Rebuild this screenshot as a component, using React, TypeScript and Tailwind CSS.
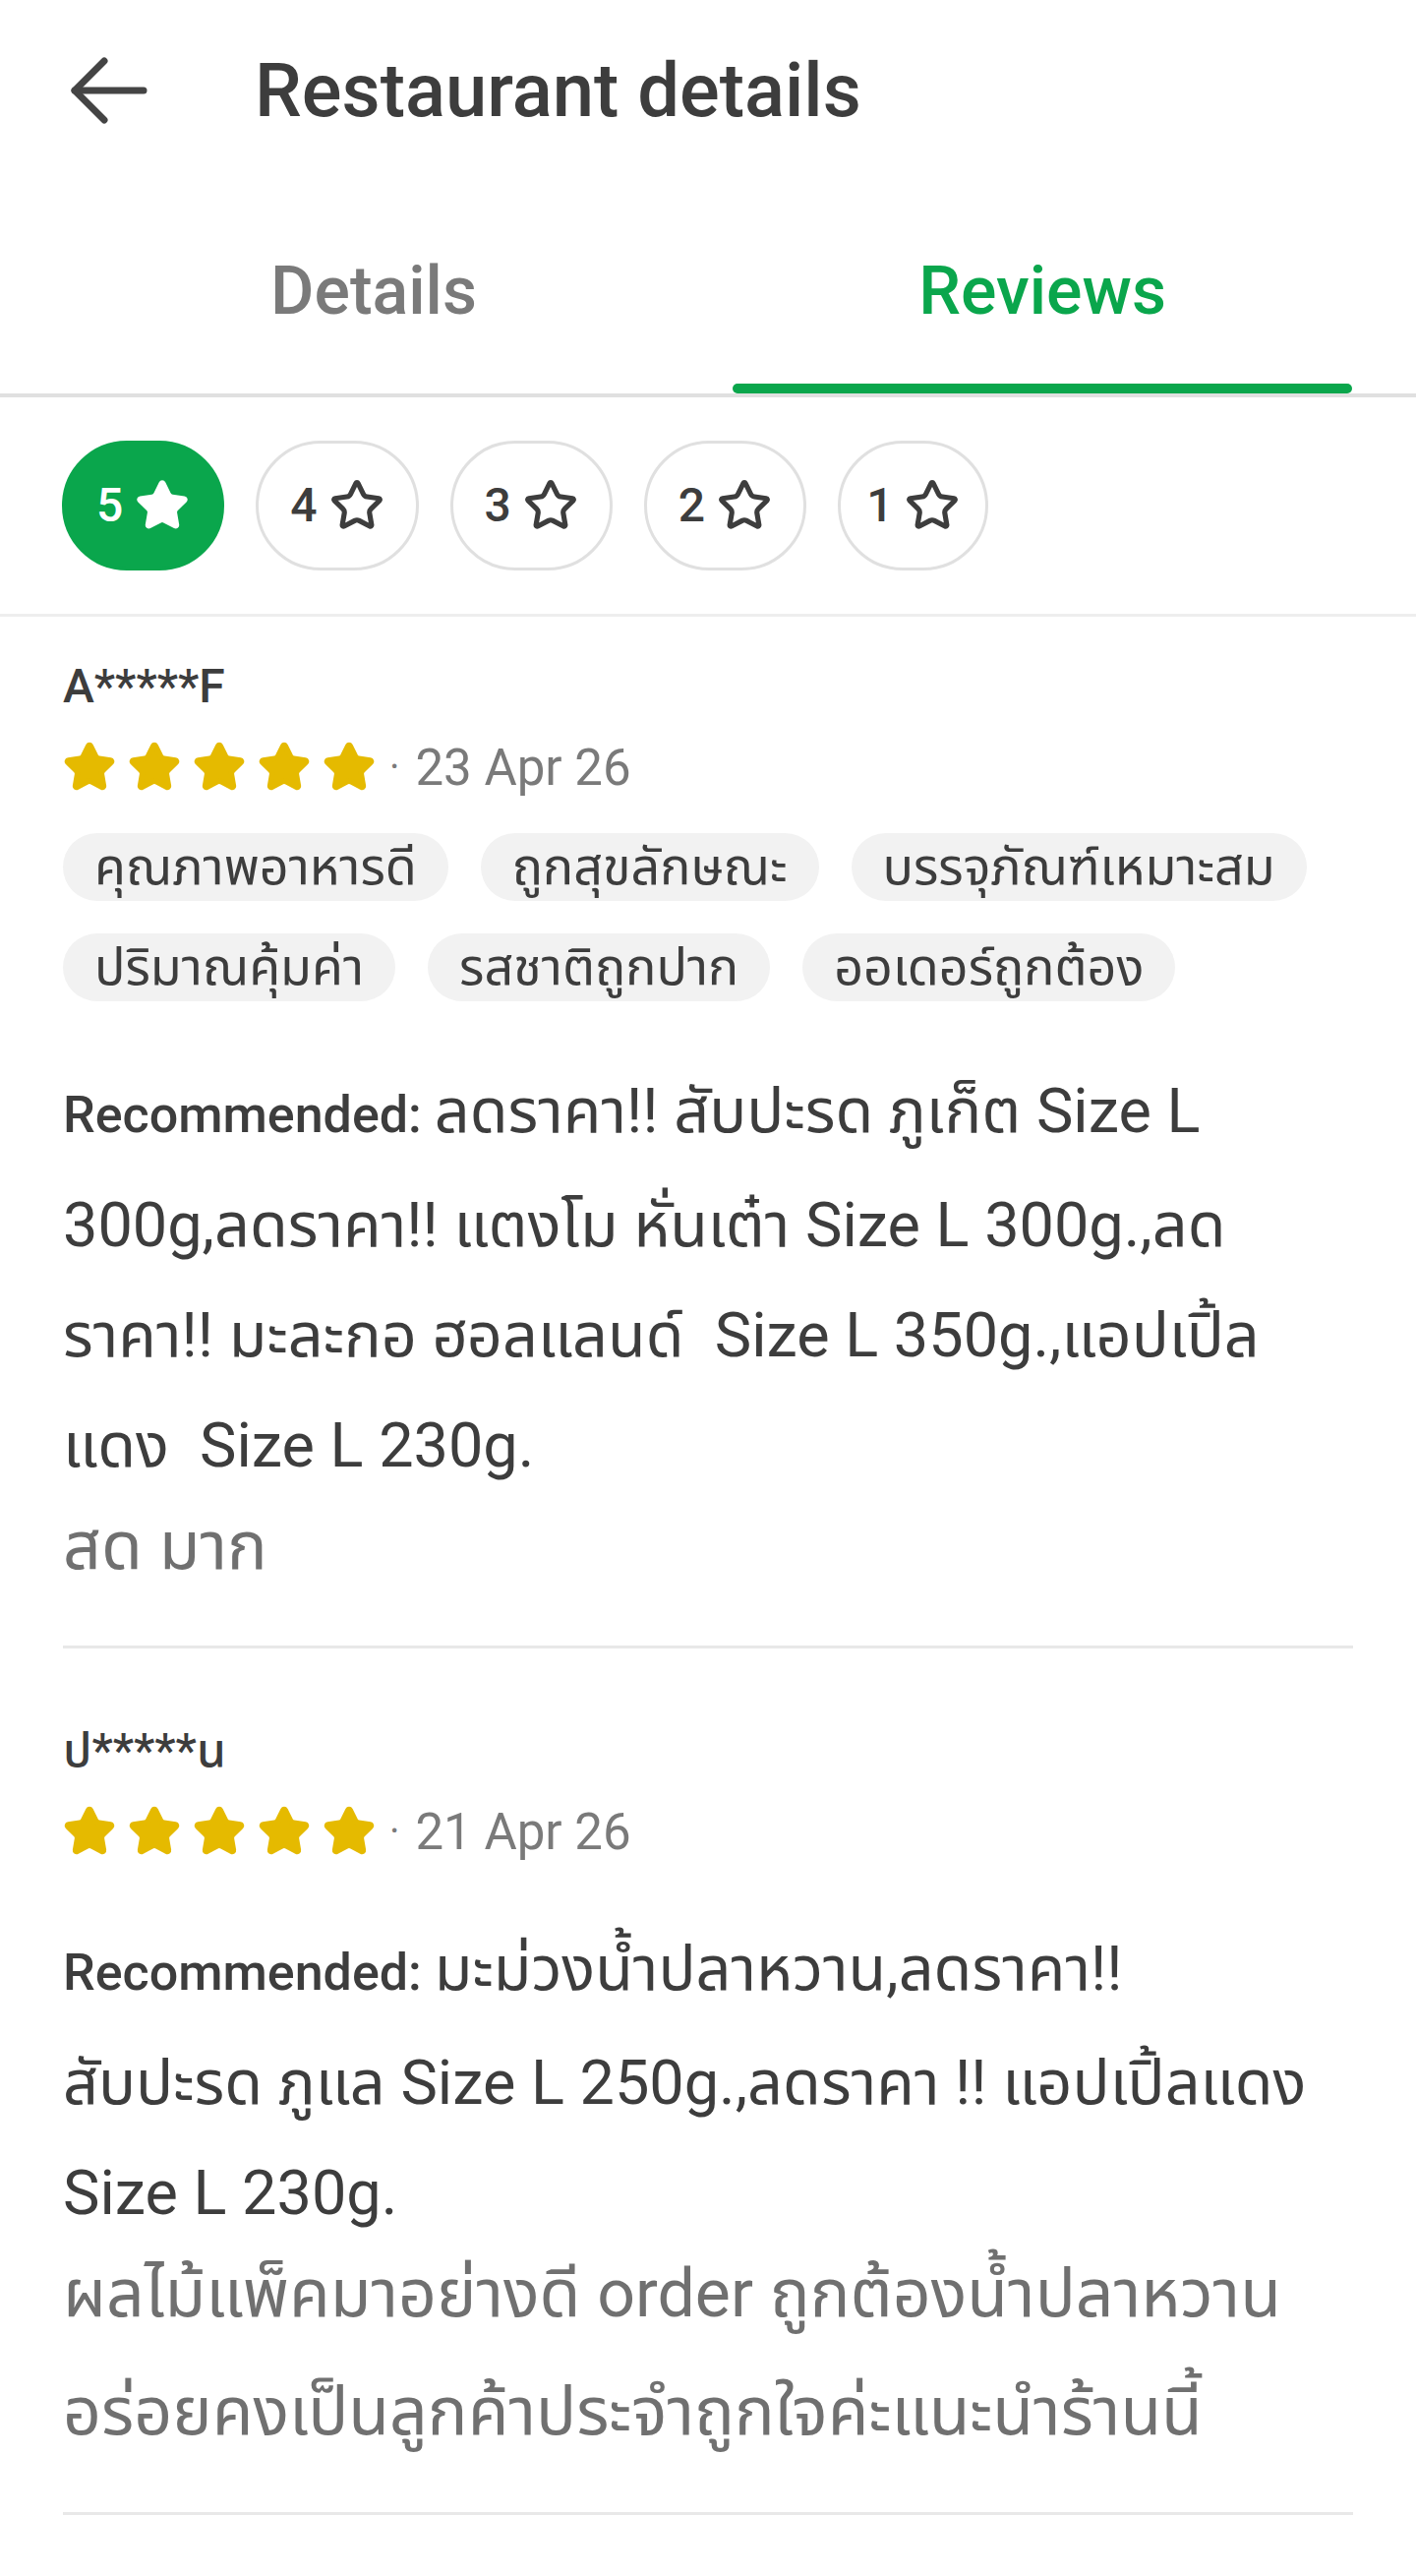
import { Star } from 'lucide-react';

const font = { fontFamily: 'Roboto, "Noto Sans", "Noto Sans Thai", sans-serif' };

type Review = {
  name: string;
  date: string;
  tags: string[];
  items: string;
  comment: string;
};

const reviews: Review[] = [
  {
    name: 'A*****F',
    date: '23 Apr 26',
    tags: ['คุณภาพอาหารดี', 'ถูกสุขลักษณะ', 'บรรจุภัณฑ์เหมาะสม', 'ปริมาณคุ้มค่า', 'รสชาติถูกปาก', 'ออเดอร์ถูกต้อง'],
    items: 'ลดราคา!! สับปะรด ภูเก็ต Size L 300g,ลดราคา!! แตงโม หั่นเต๋า Size L 300g.,ลดราคา!! มะละกอ ฮอลแลนด์  Size L 350g.,แอปเปิ้ลแดง  Size L 230g.',
    comment: 'สด มาก',
  },
  {
    name: 'ป*****น',
    date: '21 Apr 26',
    tags: [],
    // line break + word joiners so the wrap follows the app
    items: 'มะม่วงน้ำปลาหวาน,ลดราคา!!\nสับปะรด ภูแล Size L 250g.,ลดราคา !! แอป\u2060เปิ้ล\u2060แดง Size L 230g.',
    comment: 'ผลไม้แพ็คมาอย่างดี order ถูกต้องน้ำปลาหวานอร่อยคงเป็นลูกค้าประจำถูกใจค่ะแนะนำร้านนี้',
  },
];

function BackArrow() {
  return (
    <svg width="80" height="68" viewBox="0 0 80 68" fill="none">
      <path d="M76 34H6" stroke="#444" strokeWidth="7" strokeLinecap="round" />
      <path d="M36 4 6 34l30 30" stroke="#444" strokeWidth="7" strokeLinecap="round" strokeLinejoin="round" />
    </svg>
  );
}

function RatingChip({ value, active }: { value: number; active?: boolean }) {
  const pad = value === 1 ? 'px-[26px]' : 'px-[32px]';
  return (
    <button
      className={
        active
          ? `flex h-[132px] items-center gap-[12px] rounded-full border-[3px] border-[#0aa64c] bg-[#0aa64c] ${pad} text-white`
          : `flex h-[132px] items-center gap-[12px] rounded-full border-[3px] border-[#e0e0e0] bg-white ${pad} text-[#3d3d3d]`
      }
    >
      <span className="text-[48px] font-medium leading-none">{value}</span>
      {active ? (
        <Star className="h-[56px] w-[56px]" fill="white" strokeWidth={2} />
      ) : (
        <Star className="h-[56px] w-[56px]" strokeWidth={2.2} />
      )}
    </button>
  );
}

function ReviewItem({ review, first }: { review: Review; first?: boolean }) {
  return (
    <div className={first ? 'border-b-[3px] border-[#e8e8e8] pb-[41px] pt-[43px]' : 'border-b-[3px] border-[#e8e8e8] pb-[42px] pt-[76px]'}>
      <p className="h-[56px] text-[48px] font-medium leading-[56px] text-[#3d3d3d]">{review.name}</p>

      <div className="mt-[24px] flex h-[60px] items-center">
        <div className="flex gap-[12px]">
          {[0, 1, 2, 3, 4].map((i) => (
            <Star key={i} className="h-[54px] w-[54px] text-[#e5ba00]" fill="#e5ba00" strokeWidth={2.5} />
          ))}
        </div>
        <span className="ml-[14px] text-[40px] leading-none text-[#7a7a7a]">·</span>
        <span className="ml-[16px] text-[51px] leading-none text-[#7a7a7a]">{review.date}</span>
      </div>

      {review.tags.length > 0 && (
        <div className="mt-[37px] flex flex-wrap gap-[33px]">
          {review.tags.map((tag) => (
            <span key={tag} className="flex h-[69px] items-center rounded-full bg-[#f2f2f2] px-[32px] text-[52px] leading-none text-[#3d3d3d]">
              {tag}
            </span>
          ))}
        </div>
      )}

      <div className="pr-[40px]">
        <p className={review.tags.length > 0 ? 'mt-[56px] whitespace-pre-wrap text-[63px] leading-[112px] text-[#3d3d3d]' : 'mt-[54px] whitespace-pre-wrap text-[63px] leading-[112px] text-[#3d3d3d]'}>
          <span className="text-[52px] font-medium">Recommended: </span>
          {review.items}
        </p>
        <p className="mt-[-14px] text-[68px] leading-[120px] text-[#707070]">{review.comment}</p>
      </div>
    </div>
  );
}

export default function App() {
  return (
    <div className="min-h-[2619px] w-[1440px] bg-white" style={font}>
      {/* Header */}
      <header className="flex h-[184px] items-center px-[70px]">
        <BackArrow />
        <h1 className="ml-[109px] text-[76px] font-medium text-[#3d3d3d]">Restaurant details</h1>
      </header>

      {/* Tabs */}
      <nav className="grid h-[220px] grid-cols-2 border-b-[4px] border-[#e0e0e0] px-[40px]">
        <button className="flex flex-col">
          <span className="flex flex-1 items-center justify-center pt-[18px] text-[68px] font-medium text-[#7a7a7a]">Details</span>
          <span className="h-[10px]" />
        </button>
        <button className="flex flex-col">
          <span className="flex flex-1 items-center justify-center pt-[18px] text-[68px] font-medium text-[#0aa64c]">Reviews</span>
          <span className="mx-[25px] h-[10px] rounded-full bg-[#0aa64c]" />
        </button>
      </nav>

      {/* Rating filter */}
      <div className="flex gap-[32px] border-b-[3px] border-[#eeeeee] px-[63px] pb-[44px] pt-[44px]">
        <RatingChip value={5} active />
        <RatingChip value={4} />
        <RatingChip value={3} />
        <RatingChip value={2} />
        <RatingChip value={1} />
      </div>

      {/* Reviews */}
      <div className="px-[64px]">
        {reviews.map((r, i) => (
          <ReviewItem key={r.name} review={r} first={i === 0} />
        ))}
      </div>
    </div>
  );
}
